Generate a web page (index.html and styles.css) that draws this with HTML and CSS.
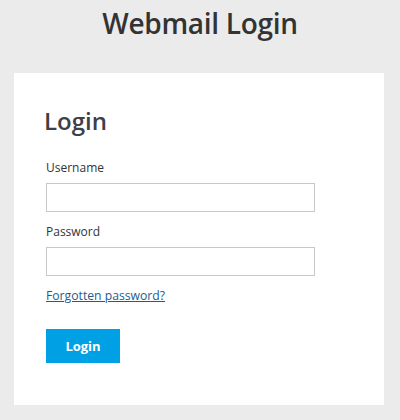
FILE: index.html
```html
<!DOCTYPE html>
<html lang="en">
<head>
<meta charset="utf-8">
<title>Webmail Login</title>
<link rel="stylesheet" href="styles.css">
</head>
<body>
<header class="site-title">Webmail Login</header>
<main class="card">
  <h1 class="card-title">Login</h1>
  <form class="form">
    <label class="label" for="user">Username</label>
    <input class="input" id="user" type="text">
    <label class="label" for="pass">Password</label>
    <input class="input" id="pass" type="password">
    <a class="forgot" href="#">Forgotten password?</a>
    <button class="btn" type="button">Login</button>
  </form>
</main>
</body>
</html>
```
FILE: styles.css
```css
html, body {
  margin: 0;
  padding: 0;
}
body {
  background: #ebebeb;
  font-family: "Open Sans", "Noto Sans", sans-serif;
  color: #333;
  width: 400px;
  height: 420px;
  overflow: hidden;
}
.site-title {
  text-align: center;
  font-size: 28px;
  font-weight: 600;
  color: #333;
  line-height: 40px;
  height: 40px;
  margin-top: 3px;
  letter-spacing: -0.3px;
}
.card {
  background: #fff;
  margin: 30px 16px 0 14px;
  height: 332px;
  padding: 0 32px;
  box-sizing: border-box;
}
.card-title {
  margin: 0 0 0 -2px;
  padding-top: 30px;
  font-size: 24px;
  font-weight: 600;
  color: #3d4047;
  line-height: 36px;
}
.form {
  display: flex;
  flex-direction: column;
  align-items: flex-start;
  padding-top: 20px;
}
.label {
  font-size: 12px;
  line-height: 18px;
  color: #333;
}
.input {
  margin-top: 6px;
  margin-bottom: 11px;
  width: 269px;
  height: 29px;
  box-sizing: border-box;
  border: 1px solid #c8c8c8;
  border-radius: 0;
  padding: 0 6px;
  background: #fff;
}
.forgot {
  margin-top: 0;
  font-size: 12.2px;
  line-height: 18px;
  color: #1d5c8e;
  text-decoration: underline;
}
.btn {
  margin-top: 24px;
  width: 74px;
  height: 34px;
  border: 0;
  background: #00a1e4;
  color: #fff;
  font-family: "Open Sans", "Noto Sans", sans-serif;
  font-weight: 700;
  font-size: 13px;
  padding: 0;
}
```
